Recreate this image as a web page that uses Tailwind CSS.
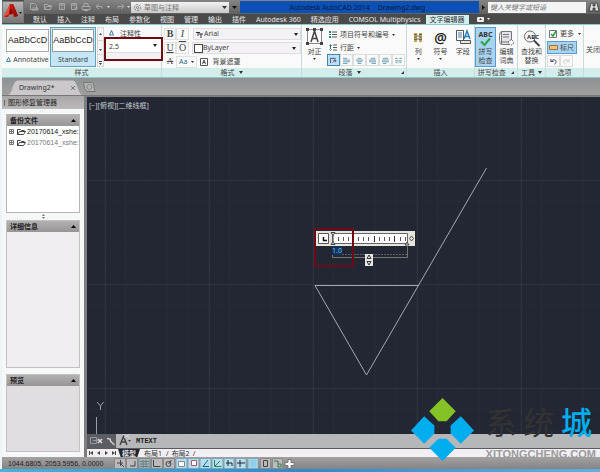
<!DOCTYPE html>
<html lang="zh-CN">
<head>
  <meta charset="UTF-8" />
  <meta name="viewport" content="width=device-width, initial-scale=1.0"/>
  <title>Autodesk AutoCAD 2014 - Drawing2.dwg</title>
  <script src="https://cdn.jsdelivr.net/npm/@tailwindcss/browser@4"></script>
</head>
<body class="relative flex h-screen flex-col overflow-hidden bg-[#eef3f6] font-['Noto_Sans','Noto_Sans_CJK_SC',sans-serif] text-[7px] leading-[9px] text-[#444]">

  <!-- title bar + ribbon tabs -->
  <header class="ml-[2px] flex h-6 shrink-0 bg-[#4a4a4a]">
    <button aria-label="应用程序菜单" class="my-px flex h-[22px] w-[22px] shrink-0 items-center border border-[#777] bg-linear-to-b from-[#b5b5b5] to-[#777]">
      <svg class="h-5 w-5" viewBox="0 0 20 20">
        <path d="M1 15 7 2h3l5 12-4 1-1-3-4 1-1 2z" fill="#c4160c"/>
        <path d="M7 2 6 12l-5 3z" fill="#ee4a35"/>
        <path d="M8 6 6 12l4-1z" fill="#7c0a05"/>
        <path d="M10 2l5 12-4 1z" fill="#9c0f08"/>
        <path d="M16 10h3l-1.500 2z" fill="#222"/>
      </svg>
    </button>
    <div class="flex min-w-0 flex-1 flex-col">
      <div class="flex h-[14px] items-center bg-linear-to-b from-[#858585] to-[#606060]">
        <svg class="h-[14px] w-[107px] shrink-0" viewBox="0 0 107 14" fill="none" stroke="#a8a8a8">
          <path d="M6.500 3.500h4l2 2v4h-6zM8 8h6v2H8"/>
          <path d="M20.500 9.500v-5h3l1 1h3M20.500 9.500l2-3h5l-1 3z"/>
          <path d="M35.500 3.500h5v6h-5zM37 3.500v2h2v-2M37 8h2"/>
          <path d="M47.500 3.500h5v6h-5zM49 3.500v2h2v-2M50 8h4"/>
          <path d="M58 6.500h8v3h-8zM60 6V3.500h4V6M60 9.500h4v1h-4z"/>
          <path d="M75 4l-3 2.500L75 9M72 6.500h6v2"/>
          <path d="M97 4l3 2.500L97 9M100 6.500h-6v2"/>
          <path d="M83 6h3l-1.500 2zM103 6h3l-1.500 2z" fill="#ddd" stroke="none"/>
        </svg>
        <div class="relative h-[11px] w-[98px] shrink-0 bg-linear-to-b from-[#f2f2f2] to-[#c9c9c9]">
          <svg class="absolute left-[2px] top-px h-[9px] w-[9px]" viewBox="0 0 9 9" fill="none" stroke="#777"><circle cx="4.500" cy="4.500" r="3" stroke-dasharray="2 1"/><circle cx="4.500" cy="4.500" r="1"/></svg>
          <select aria-label="工作空间" class="block h-[11px] w-full appearance-none pl-[13px] text-[#777]"><option>草图与注释</option></select>
          <svg class="absolute right-[2px] top-1 h-[3px] w-[5px]" viewBox="0 0 5 3"><path d="M0 0h5L2.500 3z" fill="#333"/></svg>
        </div>
        <svg class="mx-[3px] h-[4px] w-[5px] shrink-0" viewBox="0 0 5 4"><path d="M0 0h5M0 1h5L2.500 4z" fill="#111"/></svg>
        <h1 class="flex h-[12px] flex-1 items-center justify-center gap-2 whitespace-nowrap bg-[#0b50b5] pr-1 text-[#071a45]">
          <span>Autodesk AutoCAD 2014</span><span>Drawing2.dwg</span>
        </h1>
        <svg class="mx-[3px] h-[5px] w-[3px] shrink-0" viewBox="0 0 3 5"><path d="M0 0l3 2.500L0 5z" fill="#111"/></svg>
        <input type="text" aria-label="搜索" placeholder="键入关键字或短语" class="h-[11px] w-[98px] bg-[#f4f4f4] px-[2px] italic placeholder:text-[#777]"/>
        <svg class="ml-[2px] h-3 w-3 shrink-0" viewBox="0 0 12 12" fill="#ddd" stroke="#222" stroke-width=".7"><path d="M3 2h2v3h2V2h2l2 8H7V7H5v3H1z"/></svg>
      </div>
      <nav class="flex flex-1 items-center whitespace-nowrap pl-1 text-[#e8e8e8]">
        <a href="#" class="px-[5px]">默认</a>
        <a href="#" class="px-[5px]">插入</a>
        <a href="#" class="px-[5px]">注释</a>
        <a href="#" class="px-[5px]">布局</a>
        <a href="#" class="px-[5px]">参数化</a>
        <a href="#" class="px-[5px]">视图</a>
        <a href="#" class="px-[5px]">管理</a>
        <a href="#" class="px-[5px]">输出</a>
        <a href="#" class="px-[5px]">插件</a>
        <a href="#" class="px-[5px]">Autodesk 360</a>
        <a href="#" class="px-[5px]">精选应用</a>
        <a href="#" class="px-[5px]">COMSOL Multiphysics</a>
        <a href="#" class="bg-[#d3eeee] px-1 text-[#333]" aria-current="page">文字编辑器</a>
        <svg class="ml-2 h-[6px] w-[14px]" viewBox="0 0 14 6"><rect width="7" height="5" y="1" rx="1" fill="#eee"/><path d="M2 4h3L3.500 2z" fill="#444"/><path d="M10 2h3l-1.500 2z" fill="#eee"/></svg>
      </nav>
    </div>
  </header>

  <!-- ribbon -->
  <section class="relative ml-[2px] flex h-[54px] shrink-0 border-y border-[#8ccaca] bg-[#fafafb] whitespace-nowrap">
    <div class="flex w-[160px] shrink-0 flex-col border-r border-[#c5dada]">
      <div class="flex flex-1 pt-[2px] pl-[3px]">
        <button class="flex h-10 w-[45px] flex-col items-center pt-[2px]">
          <span class="flex h-[23px] w-[43px] items-center justify-center border border-[#aaa] bg-white font-['Liberation_Sans',sans-serif] text-[9px] text-[#222]">AaBbCcD</span>
          <span class="flex flex-1 items-center gap-[2px]"><svg class="h-[5px] w-[5px]" viewBox="0 0 5 5" fill="none" stroke="#3a86b5"><path d="M.5 4.500 2.500.500l2 4z"/></svg>Annotative</span>
        </button>
        <button class="flex h-10 w-[46px] flex-col items-center border border-[#64a3bd] bg-[#c4e6f7] pt-px">
          <span class="flex h-[23px] w-[42px] items-center justify-center border border-[#999] bg-white font-['Liberation_Sans',sans-serif] text-[9px] text-[#222]">AaBbCcD</span>
          <span class="flex flex-1 items-center">Standard</span>
        </button>
        <svg class="h-10 w-[9px]" viewBox="0 0 9 40"><rect x="1.500" y=".5" width="6" height="39" fill="#f3f3f3" stroke="#d6d6d6"/><path d="M1 13.500h7M1 27.500h7" stroke="#d6d6d6"/><path d="M3 8h3L4.500 6zM3 22h3l-1.500 2zM3 36h3l-1.500 2zM3 34h3v1H3z" fill="#444"/></svg>
        <div class="flex min-w-0 flex-1 flex-col">
          <button class="flex h-3 items-center gap-[6px] pl-1"><svg class="h-[6px] w-[5px]" viewBox="0 0 5 6" fill="none" stroke="#3a7ca5"><path d="M.5 5 2.500.500l2 4.500z"/></svg>注释性</button>
          <div class="relative h-[13px] bg-white">
            <select aria-label="文字高度" class="block h-full w-full appearance-none pt-px pl-1 text-[#333]"><option>2.5</option></select>
            <svg class="absolute right-1 top-[5px] h-[3px] w-[4px]" viewBox="0 0 4 3"><path d="M0 0h4L2 3z" fill="#222"/></svg>
          </div>
          <div class="h-[10px] border-t border-[#ddd] bg-[#f4f1f5]"></div>
        </div>
      </div>
      <h2 class="bg-[#d3ecec] text-center">样式</h2>
    </div>

    <div class="flex w-[140px] shrink-0 flex-col border-r border-[#c5dada]">
      <div class="flex flex-1 flex-col gap-px pt-[2px] pl-[2px]">
        <div class="flex h-[13px] items-center">
          <button class="h-3 w-3 border border-[#e0e0e0] font-['Liberation_Serif',serif] text-[10px] font-bold">B</button>
          <button class="mr-1 h-3 w-[13px] border border-[#e0e0e0] font-['Liberation_Serif',serif] text-[10px] italic">I</button>
          <div class="relative h-[12px] flex-1 border border-[#e0dce2] bg-[#f5f2f6]">
            <svg class="absolute left-[2px] top-[2px] h-[7px] w-[7px]" viewBox="0 0 7 7" fill="none" stroke="#333"><path d="M0 1.500h4M2 1v4M3 3h4M5 3v4"/></svg>
            <select aria-label="字体" class="block h-full w-full appearance-none pl-[10px]"><option>Arial</option></select>
            <svg class="absolute right-[2px] top-1 h-[3px] w-[4px]" viewBox="0 0 4 3"><path d="M0 0h4L2 3z" fill="#222"/></svg>
          </div>
        </div>
        <div class="flex h-[13px] items-center">
          <button class="h-3 w-3 border border-[#e0e0e0] font-['Liberation_Serif',serif] text-[10px] underline">U</button>
          <button class="mr-[3px] h-3 w-[13px] border border-[#e0e0e0] font-['Liberation_Serif',serif] text-[10px] overline">O</button>
          <div class="relative h-[12px] flex-1 border border-[#e0dce2] bg-[#f5f2f6]">
            <span class="absolute top-px left-px h-[9px] w-[9px] border border-[#444] bg-white"></span>
            <select aria-label="颜色" class="block h-full w-full appearance-none pl-[10px]"><option>ByLayer</option></select>
            <svg class="absolute right-1 top-1 h-[3px] w-[4px]" viewBox="0 0 4 3"><path d="M0 0h4L2 3z" fill="#222"/></svg>
          </div>
        </div>
        <div class="flex h-[13px] items-center">
          <button class="h-3 w-3 font-['Liberation_Serif',serif] text-[9px] line-through">A</button>
          <button class="flex h-3 items-center gap-1 border border-[#e0e0e0] px-[2px] text-[#2d6a92]">Aa<svg class="h-[2px] w-[3px]" viewBox="0 0 3 2"><path d="M0 0h3L1.500 2z" fill="#333"/></svg></button>
          <button class="ml-[3px] flex items-center gap-1"><svg class="h-2 w-2" viewBox="0 0 8 8" fill="none" stroke="#555"><path d="M.5.500h7v7h-7zM2.500 6 4 2l1.500 4M3 4.500h2"/></svg>背景遮罩</button>
        </div>
      </div>
      <h2 class="flex items-center justify-center gap-1 bg-[#d3ecec]">格式 <svg class="h-[3px] w-[4px]" viewBox="0 0 4 3"><path d="M0 0h4L2 3z" fill="#333"/></svg></h2>
    </div>

    <div class="flex w-[105px] shrink-0 flex-col border-r border-[#c5dada]">
      <div class="flex flex-1 gap-1 pl-1 pt-[3px]">
        <button class="flex w-[17px] flex-col items-center gap-[2px]">
          <svg class="h-[17px] w-[17px]" viewBox="0 0 17 17" fill="none" stroke="#444"><path d="M1.500 1.500h14v14h-14z" stroke="#888"/><path d="M5 14 8.500 3 12 14M6 10.500h5" stroke-width="1.500"/><path d="M0 0h3v3H0zM7 0h3v3H7zM14 0h3v3h-3zM0 14h3v3H0zM14 14h3v3h-3z" fill="#444" stroke="none"/></svg>
          <span>对正</span>
          <svg class="h-[2px] w-[3px]" viewBox="0 0 3 2"><path d="M0 0h3L1.500 2z" fill="#333"/></svg>
        </button>
        <div class="flex flex-col">
          <button class="flex h-[13px] items-center gap-[3px] pl-[2px]"><svg class="h-[7px] w-[8px]" viewBox="0 0 8 7"><path d="M0 0h2v2H0zM0 3h2v1H0zM0 5h2v2H0z" fill="#287"/><path d="M3 1h5M3 3.500h5M3 6h5" stroke="#555"/></svg>项目符号和编号<svg class="h-[2px] w-[3px]" viewBox="0 0 3 2"><path d="M0 0h3L1.500 2z" fill="#333"/></svg></button>
          <button class="flex h-[13px] items-center gap-[3px] pl-[2px]"><svg class="h-[7px] w-[8px]" viewBox="0 0 8 7"><path d="M0 2 1.500 0 3 2zM0 5l1.500 2L3 5zM1 1h1v5H1z" fill="#278"/><path d="M4 1h4M4 3.500h4M4 6h4" stroke="#555"/></svg>行距<svg class="h-[2px] w-[3px]" viewBox="0 0 3 2"><path d="M0 0h3L1.500 2z" fill="#333"/></svg></button>
          <div class="flex h-3">
            <button aria-label="默认" class="w-[13px] border border-[#3f86b0] bg-[#bfdff5] px-[2px]"><svg viewBox="0 0 8 8" fill="none" stroke="#446"><path d="M.5 7V1.500h6M3 6.500l3-3M4 3.500h2.500V6"/></svg></button>
            <button aria-label="左对齐" class="w-[13px] border border-[#ddd] px-[2px]"><svg viewBox="0 0 8 8" stroke="#5b96a8"><path d="M0 1.500h5M0 3.500h8M0 5.500h8M0 7.500h5"/></svg></button>
            <button aria-label="居中" class="w-[13px] border border-[#ddd] px-[2px]"><svg viewBox="0 0 8 8" stroke="#5b96a8"><path d="M2 1.500h4M0 3.500h8M1 5.500h6M2 7.500h4"/></svg></button>
            <button aria-label="右对齐" class="w-[13px] border border-[#ddd] px-[2px]"><svg viewBox="0 0 8 8" stroke="#5b96a8"><path d="M2 1.500h5M0 3.500h8M0 5.500h8M3 7.500h5"/></svg></button>
            <button aria-label="对正" class="w-[13px] border border-[#ddd] px-[2px]"><svg viewBox="0 0 8 8" stroke="#5b96a8"><path d="M1 1.500h6M0 3.500h8M0 5.500h8M1 7.500h4"/></svg></button>
            <button aria-label="分散对齐" class="w-[13px] border border-[#ddd] px-[2px]"><svg viewBox="0 0 8 8" stroke="#5b96a8"><path d="M0 1.500h3M5 1.500h3M0 4.500h8M1 6.500h2M5 6.500h2"/></svg></button>
          </div>
        </div>
      </div>
      <h2 class="flex items-center justify-center gap-1 bg-[#d3ecec] pr-[2px]"><span class="flex flex-1 items-center justify-center gap-1">段落 <svg class="h-[3px] w-[4px]" viewBox="0 0 4 3"><path d="M0 0h4L2 3z" fill="#333"/></svg></span><svg class="h-[3px] w-[3px]" viewBox="0 0 3 3"><path d="M3 0v3H0z" fill="#333"/></svg></h2>
    </div>

    <div class="flex w-[68px] shrink-0 flex-col border-r border-[#c5dada]">
      <div class="flex flex-1 justify-around pt-1">
        <button class="flex w-[18px] flex-col items-center gap-[2px]">
          <svg class="h-4 w-4" viewBox="0 0 16 16"><path d="M4 4h3v9H4zM9 4h3v9H9z" fill="#c3a64b"/><path d="M4 5.500h3M4 8h3M4 10.500h3M9 5.500h3M9 8h3M9 10.500h3M7 7h2M7 10h2" stroke="#666"/></svg>
          <span>列</span>
          <svg class="h-[2px] w-[3px]" viewBox="0 0 3 2"><path d="M0 0h3L1.500 2z" fill="#333"/></svg>
        </button>
        <button class="flex w-[18px] flex-col items-center gap-[2px]">
          <span class="flex h-4 items-center text-[14px] font-semibold text-[#222]">@</span>
          <span>符号</span>
          <svg class="h-[2px] w-[3px]" viewBox="0 0 3 2"><path d="M0 0h3L1.500 2z" fill="#333"/></svg>
        </button>
        <button class="flex w-[18px] flex-col items-center gap-[2px]">
          <svg class="h-4 w-4" viewBox="0 0 16 16" fill="#fff" stroke="#555"><path d="M1.500 1.500h7v10h-7z"/><path d="M3 4h4M3 6h4M3 8h4" stroke="#47a"/><path d="M5.500 11.500v3h10v-3z" fill="#e7e7e7"/><path d="M9 10l3-8 3 8M10 7.500h4" fill="none" stroke="#2980b5" stroke-width="1.500"/></svg>
          <span>字段</span>
        </button>
      </div>
      <h2 class="bg-[#d3ecec] text-center">插入</h2>
    </div>

    <div class="flex w-[43px] shrink-0 flex-col border-r border-[#c5dada]">
      <div class="flex flex-1 pt-[2px]">
        <button class="flex h-10 w-[21px] flex-col items-center border border-[#5b9bd0] bg-[#a9d3f2] pt-[2px]">
          <svg class="h-[17px] w-[17px]" viewBox="0 0 17 17"><text x="8.500" y="7" text-anchor="middle" font-size="7" font-weight="700" fill="#333">ABC</text><path d="M4 11.500l3.500 3.500L13 8.500" fill="none" stroke="#27a83c" stroke-width="2"/></svg>
          <span>拼写</span><span>检查</span>
        </button>
        <button class="flex h-10 w-[21px] flex-col items-center pt-[3px]">
          <svg class="h-[17px] w-[17px]" viewBox="0 0 17 17" fill="#e4e4ea" stroke="#777"><path d="M3.500 1.500h10v13h-10zM3.500 12h10M5 4.500h6M5 7h6"/><path d="M3 14.500c-2-1-2-12 0-13" fill="none"/><circle cx="13" cy="12.500" r="2.500" fill="#fff" stroke="#557" stroke-dasharray="1.500 1"/></svg>
          <span>编辑</span><span>词典</span>
        </button>
      </div>
      <h2 class="flex items-center justify-around bg-[#d3ecec]">拼写检查 <svg class="h-[3px] w-[3px]" viewBox="0 0 3 3"><path d="M3 0v3H0z" fill="#333"/></svg></h2>
    </div>

    <div class="flex w-[28px] shrink-0 flex-col border-r border-[#c5dada]">
      <button class="flex flex-1 flex-col items-center pt-[5px]">
        <svg class="h-[17px] w-[18px]" viewBox="0 0 18 17"><circle cx="7" cy="6.500" r="5.500" fill="#f7fbff" stroke="#666"/><path d="M11 10.500l5.500 5.500" stroke="#444" stroke-width="2"/><text x="10" y="9" text-anchor="middle" font-size="6" font-weight="700" fill="#333">ABC</text></svg>
        <span>查找和</span><span>替换</span>
      </button>
      <h2 class="flex items-center justify-center gap-[3px] bg-[#d3ecec]">工具 <svg class="h-[3px] w-[4px]" viewBox="0 0 4 3"><path d="M0 0h4L2 3z" fill="#333"/></svg></h2>
    </div>

    <div class="flex w-[38px] shrink-0 flex-col border-r border-[#c5dada]">
      <div class="flex flex-1 flex-col gap-px px-px pt-[2px]">
        <button class="flex h-[13px] items-center gap-[3px] pl-[2px]"><svg class="h-2 w-2" viewBox="0 0 8 8" fill="none"><path d="M.5.500h7v7h-7z" fill="#fff" stroke="#777"/><path d="M2 4l2 2 3-5" stroke="#2a9d3a" stroke-width="1.500"/></svg>更多<svg class="ml-px h-[2px] w-[3px]" viewBox="0 0 3 2"><path d="M0 0h3L1.500 2z" fill="#333"/></svg></button>
        <button class="flex h-[13px] w-[30px] items-center gap-[2px] border border-[#5b9bd0] bg-[#a9d3f2] pl-px"><svg class="h-[5px] w-[9px]" viewBox="0 0 9 5"><path d="M.5.500h8v4h-8z" fill="#efc47f" stroke="#9a7439"/></svg>标尺</button>
        <div class="flex h-[12px]">
          <button aria-label="放弃" class="w-[13px] border border-[#ddd] px-[2px]"><svg viewBox="0 0 8 8" fill="none" stroke="#335"><path d="M1 1v3h3M1.500 4C3 1 7 2 7 4S6 6.500 5 7"/></svg></button>
          <button aria-label="重做" class="w-[13px] border border-[#ddd] px-[2px]"><svg viewBox="0 0 8 8" fill="none" stroke="#c2c8ce"><path d="M7 1v3H4M6.500 4C5 1 1 2 1 4s1 2.500 2 3"/></svg></button>
        </div>
      </div>
      <h2 class="bg-[#d3ecec] text-center">选项</h2>
    </div>

    <div class="flex min-w-0 flex-1 flex-col overflow-hidden">
      <button class="flex-1 pl-[2px] pt-[6px] text-left">关闭</button>
      <div class="h-[9px] bg-[#d3ecec]"></div>
    </div>
    <span class="pointer-events-none absolute left-[102px] top-[12px] h-[24px] w-[59px] border-2 border-[#6d0d12]"></span>
  </section>

  <!-- file tabs -->
  <div class="ml-[2px] flex h-[18px] shrink-0 items-end bg-linear-to-b from-[#8d9292] to-[#a09fa0] border-b border-[#777]">
    <div class="relative flex h-[15px] w-[80px] items-center justify-between pl-[17px] pr-[7px] text-[#333]">
      <svg class="absolute inset-0 h-full w-full" viewBox="0 0 80 15" preserveAspectRatio="none"><path d="M6 15C11 14 10 1 16 .500h55c4 0 5 13 9 14.500z" fill="#cac8ca"/></svg>
      <a href="#" class="relative">Drawing2*</a>
      <button aria-label="关闭" class="relative"><svg class="h-[4px] w-[4px]" viewBox="0 0 4 4" stroke="#777"><path d="M0 0l4 4M4 0 0 4"/></svg></button>
    </div>
    <button aria-label="新建" class="mb-[3px]"><svg class="h-[10px] w-[14px]" viewBox="0 0 14 10"><path d="M1 .5h9c2 0 2 8 3.500 9H5C2 9 3 2 1 .5z" fill="#b5b4b5" stroke="#777"/><circle cx="7.500" cy="5" r="2.500" fill="none" stroke="#888"/></svg></button>
  </div>

  <main class="ml-[2px] flex min-h-0 flex-1 bg-[#7e7e7e]">
    <!-- drawing recovery manager -->
    <aside class="flex w-[82px] shrink-0 flex-col bg-[#f6f7f9]">
      <h2 class="flex h-[13px] shrink-0 items-center gap-[3px] bg-linear-to-b from-[#a9a7a8] to-[#bbb9ba] pl-[2px] text-[#222]"><span class="h-[6px] w-px bg-[#666]"></span>图形修复管理器</h2>
      <div class="flex min-h-0 flex-1 flex-col px-1 pt-[5px] pb-[5px]">
        <section class="flex min-h-0 flex-[99] flex-col border border-[#b5b5b5] bg-white">
          <h3 class="flex h-[11px] shrink-0 items-center justify-between bg-linear-to-b from-[#b3b0b2] to-[#989597] px-[3px] font-bold text-[#222]">备份文件<svg class="h-[3px] w-[5px]" viewBox="0 0 5 3"><path d="M0 3h5L2.500 0z" fill="#000"/></svg></h3>
          <ul class="whitespace-nowrap font-['Liberation_Sans',sans-serif]">
            <li class="flex h-[11px] items-center gap-px pl-[2px] text-[#111]"><svg class="h-[7px] w-[17px] shrink-0" viewBox="0 0 17 7" fill="none" stroke="#777"><path d="M.5 1.500h4v4h-4zM1 3.500h3M2.500 2v3"/><path d="M8.500 6.500v-5h3l1 1h3M8.500 6.500l2-3h6l-2 3z" stroke="#444"/></svg>20170614_xshe:</li>
            <li class="flex h-[11px] items-center gap-px pl-[2px] text-[#777]"><svg class="h-[7px] w-[17px] shrink-0" viewBox="0 0 17 7" fill="none" stroke="#777"><path d="M.5 1.500h4v4h-4zM1 3.500h3M2.500 2v3"/><path d="M8.500 6.500v-5h3l1 1h3M8.500 6.500l2-3h6l-2 3z" stroke="#444"/></svg>20170614_xshe:</li>
          </ul>
        </section>
        <svg class="mx-auto my-px h-[5px] w-[3px] shrink-0" viewBox="0 0 3 5"><path d="M0 2h3L1.500 0zM0 3h3L1.500 5z" fill="#777"/></svg>
        <section class="flex min-h-0 flex-[149] flex-col border border-[#c2c2c2] bg-[#f1eef2]">
          <h3 class="flex h-[11px] shrink-0 items-center justify-between bg-linear-to-b from-[#b3b0b2] to-[#989597] px-[3px] font-bold text-[#222]">详细信息<svg class="h-[3px] w-[5px]" viewBox="0 0 5 3"><path d="M0 3h5L2.500 0z" fill="#000"/></svg></h3>
        </section>
        <section class="mt-[6px] flex min-h-0 flex-[77] flex-col border border-[#c2c2c2] bg-[#e1dde1]">
          <h3 class="flex h-[11px] shrink-0 items-center justify-between bg-linear-to-b from-[#b3b0b2] to-[#989597] px-[3px] font-bold text-[#222]">预览<svg class="h-[3px] w-[5px]" viewBox="0 0 5 3"><path d="M0 3h5L2.500 0z" fill="#000"/></svg></h3>
        </section>
      </div>
    </aside>

    <div class="ml-[3px] mt-px flex min-w-0 flex-1 flex-col">
      <!-- model space -->
      <div class="relative min-h-0 flex-1 overflow-hidden bg-[#222733]">
        <svg class="absolute left-0 top-0 h-full w-full" fill="none">
          <defs>
            <pattern id="minor" width="20.800" height="20.800" x="17" y="0" patternUnits="userSpaceOnUse"><path d="M.5 0v21M0 .500h21" stroke="#252a36"/></pattern>
            <pattern id="major" width="104" height="104" x="18" y="83" patternUnits="userSpaceOnUse"><path d="M.5 0v104M0 .500h104" stroke="#2e343f"/></pattern>
          </defs>
          <rect width="100%" height="100%" fill="url(#minor)"/>
          <rect width="100%" height="100%" fill="url(#major)"/>
          <path d="M399.500 71 279.500 278 228 188.500h104" stroke="#a5a8ae"/>
          <path d="M9.500 337v-17" stroke="#9a9da3"/>
          <path d="M10 305l3.500 4 3-4M13.500 309v4" stroke="#9a9da3"/>
        </svg>
        <p class="absolute left-[2px] top-1 text-[#c9ccd2]">[−][俯视][二维线框]</p>

        <!-- text editor ruler -->
        <svg class="absolute left-[228px] top-[134px] h-[36px] w-[101px]" viewBox="0 0 101 36" fill="none">
          <path d="M1 0h99v15H1z" fill="#e5e4dd"/>
          <path d="M3.500 2.500h10v10h-10z" fill="#fff" stroke="#555"/>
          <path d="M8.500 6v3.500H12" stroke="#111" stroke-width="1.500"/>
          <path d="M17.500 2.500h75v10h-75z" fill="#fff" stroke="#666"/>
          <path d="M23.500 6v4M28.500 6v4M33.500 6v4M43.500 6v4M48.500 6v4M53.500 6v4M64.500 6v4M69.500 6v4M74.500 6v4M85.500 6v4M90.500 6v4" stroke="#555"/>
          <path d="M38.500 5v6M59.500 5v6M79.500 5v6" stroke="#333"/>
          <path d="M16 1.500h4l-2 3zM16 13.500h4l-2-3zM90 14h4l-2-3zM18 4v7" fill="#ddd" stroke="#444"/>
          <path d="M94.500 7.500l2-2.500 2 2.500-2 2.500z" stroke="#555"/>
          <path d="M17.500 15v11.500h75V15" stroke="#73776f"/>
          <path d="M27 23.500h65" stroke="#5b606a" stroke-dasharray="2 1"/>
        </svg>
        <span class="absolute left-[245px] top-[149px] bg-[#0e3560] text-[#83b6e2]">1.0</span>
        <svg class="absolute left-[278px] top-[157px] h-[12px] w-[8px]" viewBox="0 0 8 12"><path d="M0 0h8v12H0z" fill="#e7e4e6"/><path d="M2 4.500h4L4 1zM2 7.500h4L4 11z" fill="none" stroke="#333"/></svg>
        <span class="absolute left-[227px] top-[131px] h-[39px] w-[40px] border-2 border-[#6e0a14]"></span>
      </div>

      <!-- command line -->
      <div class="flex h-[14px] shrink-0 bg-[#b5b7b9]">
        <svg class="h-[14px] w-[29px] shrink-0" viewBox="0 0 29 14"><path d="M0 0h29v14H0z" fill="#5a5d61"/><path d="M11 5l4 4M15 5l-4 4" stroke="#ddd" stroke-width="1.500"/><path d="M3.500 3.500h6v6h-6zM6 6.500h5" fill="none" stroke="#999"/><path d="M20 4.500l3 .500.500 2 4 4" fill="none" stroke="#ccc" stroke-width="1.500"/></svg>
        <svg class="h-[14px] w-[16px] shrink-0" viewBox="0 0 16 14" fill="none"><path d="M4 11 7.500 2.500 11 11M5.500 8h4" stroke="#444" stroke-width="1.500"/><path d="M12 6h3l-1.500 2z" fill="#444"/><path d="M7 0l7 4M14 0 8 4" stroke="#d3d4d6"/></svg>
        <input type="text" aria-label="命令" value="MTEXT" class="min-w-0 flex-1 pl-1 font-['Liberation_Mono',monospace] font-bold text-[#222]"/>
      </div>
      <!-- layout tabs -->
      <div class="flex h-[9px] shrink-0 items-center border-t border-[#5a5a60] bg-[#f1eff3] text-[#333]">
        <svg class="h-[8px] w-[31px] shrink-0" viewBox="0 0 31 8"><path d="M2 2h1v4H2zM6 2v4L3 4zM13 2v4l-3-2zM18 2v4l3-2zM25 2v4l3-2zM28 2h1v4h-1z" fill="#444"/></svg>
        <a href="#" class="flex h-2 items-center bg-[#20252e] px-1 font-bold text-[#ddd] [clip-path:polygon(0_0,100%_0,88%_100%,12%_100%)]">模型</a>
        <a href="#" class="px-1">布局1</a><span>/</span>
        <a href="#" class="px-[3px]">布局2</a><span>/</span>
      </div>
    </div>
  </main>

  <!-- status bar -->
  <footer class="ml-[2px] flex h-[12px] shrink-0 items-center bg-linear-to-b from-[#a3a1a2] to-[#858384]">
    <span class="w-[112px] shrink-0 whitespace-nowrap pl-[6px] font-['Liberation_Sans',sans-serif] text-[#222]">1044.6805, 2053.5956, 0.0000</span>
    <svg class="h-[11px] w-[182px] shrink-0" viewBox="0 0 182 11" fill="none" stroke="#444">
      <path d="M.5.500h11v10H.5zM12.500.500h11v10h-11zM37.500.500h11v10h-11zM49.500.500h11v10h-11zM146.500.500h10v10h-10zM158.500.500h10v10h-10z" fill="#bbb9ba" stroke="#8a8a8a"/>
      <path d="M62 .500h11v10H62zM74 .500h11v10H74zM86 .500h11v10H86zM98 .500h11v10H98zM110 .500h10v10h-10zM122 .500h10v10h-10zM134 .500h10v10h-10z" fill="#b9dfee" stroke="#7fa6b5"/>
      <path d="M25 .500h11v10H25z" fill="#a3b5bb" stroke="#7f8f95"/>
      <path d="M6.500 2v6M3 5h6M7 6l3 3M21 3v5h-5M39.500 2v6.500h7"/>
      <path d="M26 3.500h9M26 6h9M26 8.500h9M29 2v8M32 2v8" stroke="#6d7c82"/>
      <circle cx="54.500" cy="6" r="2.500"/><path d="M54.500 6l3-4"/>
      <path d="M64.500 3.500h6v5h-6z" fill="#fff" stroke="#888"/><path d="M77.500 2.500h5v5h-5z" fill="#fff" stroke="#b56"/>
      <path d="M94 2l-5 6.500h6" stroke="#168"/><path d="M100.500 2v6.500h7M101 8l5-5" stroke="#285"/>
      <path d="M114 2v6M112 5h6v3" stroke="#223"/><path d="M126 2v7M123 5h8" stroke="#223"/>
      <path d="M136 2h6v7h-6z" fill="#8fd0ec" stroke="#8fd0ec"/><path d="M149.500 2.500h4v6h-4z"/><path d="M160 3h4v3M164 6h3v3h-3z" stroke="#387c45"/>
      <path d="M174 1.500h3v3h3v3h-3v3h-3v-3h-3v-3h3z" fill="#fff" stroke="#777"/>
    </svg>
  </footer>
  <div class="h-[3px] shrink-0 bg-linear-to-r from-[#45b4df] via-[#3288cc] to-[#5fb0e2]"></div>

  <!-- site watermark -->
  <div class="absolute right-1 bottom-[11px] flex items-end gap-3">
    <svg class="h-[63px] w-[63px]" viewBox="0 0 62 62"><path d="M31 0l13 13-9 10h-8L18 13z" fill="#84c225"/><path d="M13 18l10 9v8l-10 10L0 32zM49 18l13 14-13 13-10-10v-8zM27 40h8l9 9-13 13-13-13z" fill="#00adef"/></svg>
    <div class="flex flex-col gap-2">
      <p class="flex justify-between pr-1 font-['Noto_Sans_CJK_SC',sans-serif] text-[31px] leading-[36px] text-[#333]"><span>系</span><span>统</span><span class="font-medium text-[#00adef]">城</span></p>
      <p class="font-['Liberation_Sans',sans-serif] text-[11px] leading-[14px] font-bold text-[#9c9a9d]">XITONGCHENG.COM</p>
    </div>
  </div>
</body>
</html>
